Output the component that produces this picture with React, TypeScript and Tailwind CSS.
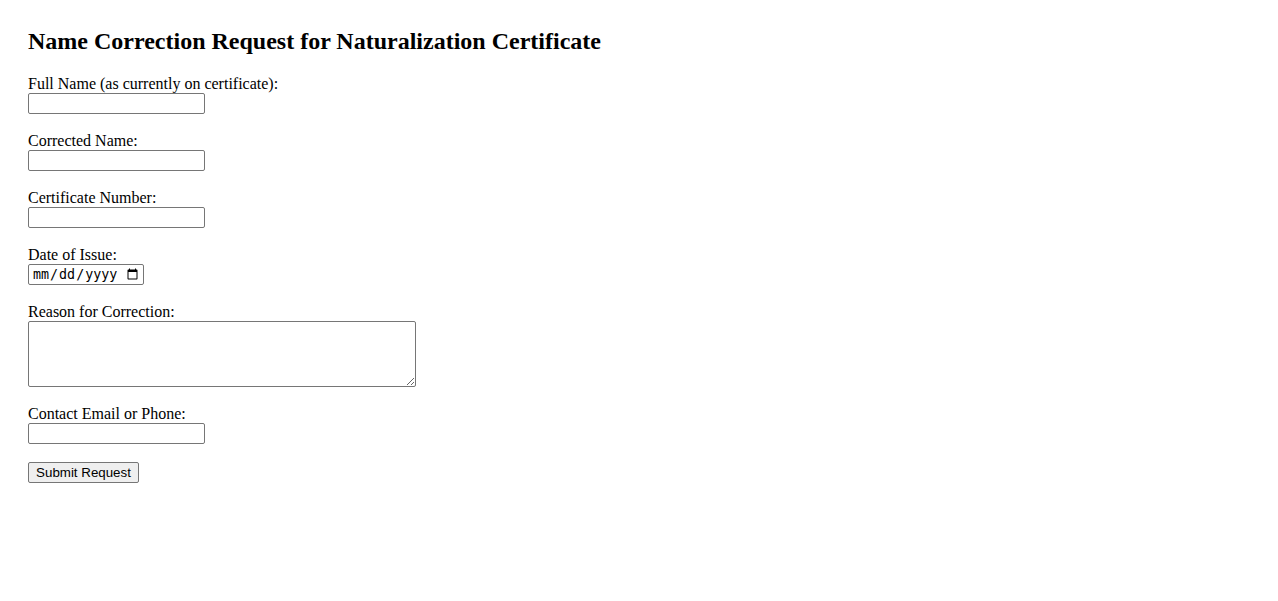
import React from "react";

const inputCls =
  "block w-[177px] h-[21px] border border-[#767676] rounded-[2px] px-[2px] py-[1px] bg-white text-[13.33px] font-['Liberation_Sans',Arial,sans-serif]";

function Field({ label, children }: { label: string; children: React.ReactNode }) {
  return (
    <div className="mb-[18px]">
      <label className="block h-[18px] leading-[18px]">{label}</label>
      {children}
    </div>
  );
}

export default function App() {
  return (
    <div className="min-h-[601px] bg-white pl-[28px] pt-[27px] text-black text-[16px] font-['Liberation_Serif','Times_New_Roman',serif]">
      <h2 className="text-[24px] font-bold leading-[28px] mb-[20px]">
        Name Correction Request for Naturalization Certificate
      </h2>
      <form onSubmit={(e) => e.preventDefault()}>
        <Field label="Full Name (as currently on certificate):">
          <input type="text" className={inputCls} />
        </Field>
        <Field label="Corrected Name:">
          <input type="text" className={inputCls} />
        </Field>
        <Field label="Certificate Number:">
          <input type="text" className={inputCls} />
        </Field>
        <Field label="Date of Issue:">
          <input
            type="date"
            className="block w-[116px] h-[21px] border border-[#767676] rounded-[2px] pl-[3px] pr-[2px] py-[1px] bg-white text-[13.33px] font-['DejaVu_Sans_Mono',monospace]"
          />
        </Field>
        <Field label="Reason for Correction:">
          <textarea className="block w-[388px] h-[66px] border border-[#767676] rounded-[2px] p-[2px] bg-white text-[13.33px] font-['Liberation_Mono',monospace]" />
        </Field>
        <Field label="Contact Email or Phone:">
          <input type="text" className={inputCls} />
        </Field>
        <button
          type="submit"
          className="block w-[111px] h-[21px] border border-[#767676] rounded-[2px] bg-[#efefef] px-[6px] py-[1px] text-[13.33px] leading-[16px] font-['Liberation_Sans',Arial,sans-serif] text-black"
        >
          Submit Request
        </button>
      </form>
    </div>
  );
}
